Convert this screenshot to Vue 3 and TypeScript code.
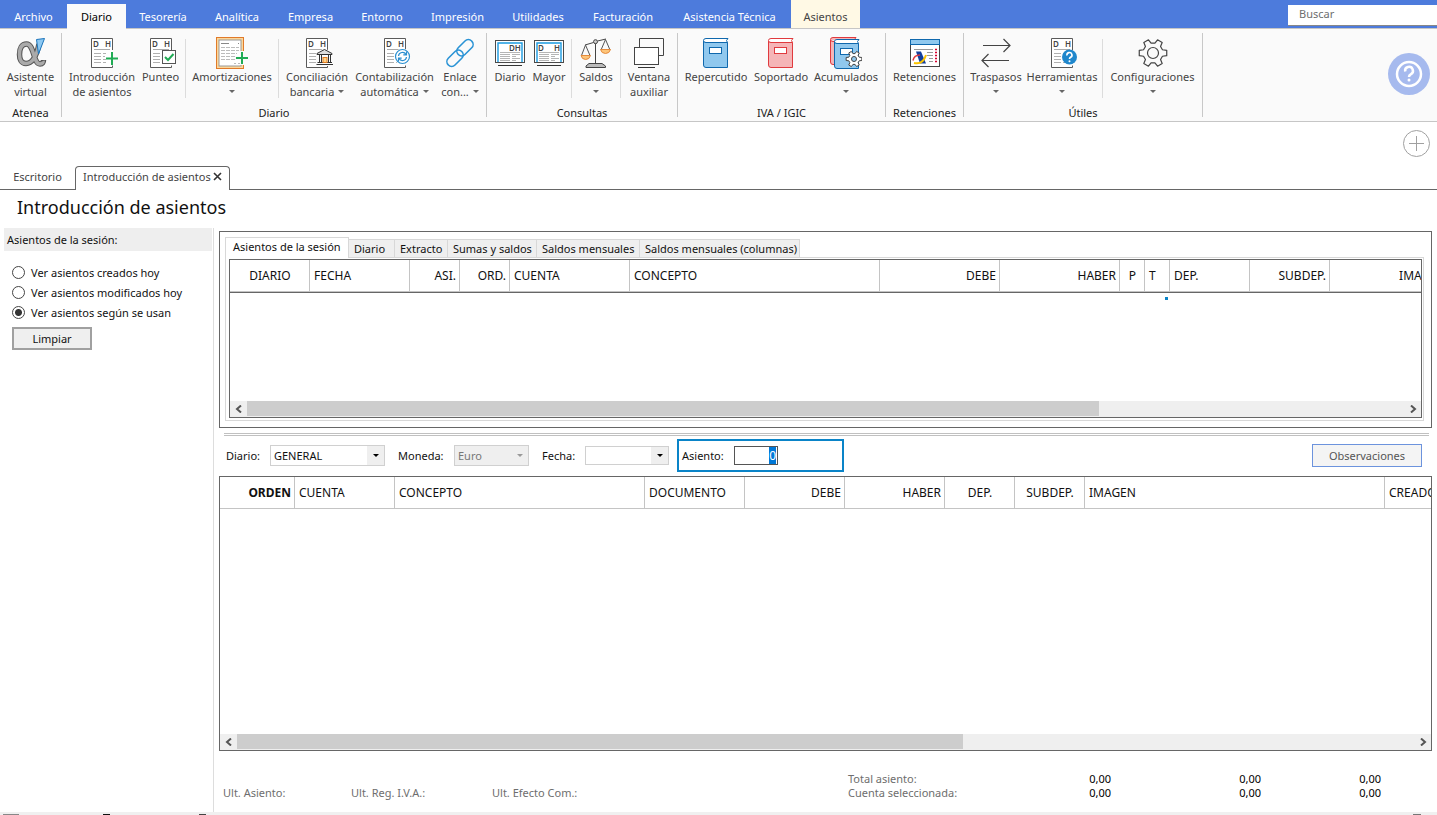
<script setup lang="ts">
import { onMounted, ref } from 'vue'

interface Tool { icon: string; lines: string[]; width: number; menu?: boolean; sep?: boolean }
interface Group { name: string; tools: Tool[]; roomy?: boolean }
interface Column { name: string; width: number; align: 'left' | 'right' | 'center'; strong?: boolean }

const menu = [
  { name: 'Archivo', width: 67 },
  { name: 'Diario', width: 59 },
  { name: 'Tesorería', width: 74 },
  { name: 'Analítica', width: 74 },
  { name: 'Empresa', width: 73 },
  { name: 'Entorno', width: 70 },
  { name: 'Impresión', width: 81 },
  { name: 'Utilidades', width: 80 },
  { name: 'Facturación', width: 90 },
  { name: 'Asistencia Técnica', width: 123 },
  { name: 'Asientos', width: 69 },
]

const groups: Group[] = [
  { name: 'Atenea', tools: [{ icon: 'alpha', lines: ['Asistente', 'virtual'], width: 61 }] },
  {
    name: 'Diario',
    tools: [
      { icon: 'doc-plus', lines: ['Introducción', 'de asientos'], width: 68 },
      { icon: 'doc-check', lines: ['Punteo'], width: 49, sep: true },
      { icon: 'amort', lines: ['Amortizaciones', ''], width: 92, menu: true, sep: true },
      { icon: 'doc-bank', lines: ['Conciliación', 'bancaria'], width: 76, menu: true },
      { icon: 'doc-sync', lines: ['Contabilización', 'automática'], width: 79, menu: true },
      { icon: 'link', lines: ['Enlace', 'con...'], width: 52, menu: true },
    ],
  },
  {
    name: 'Consultas',
    tools: [
      { icon: 'screen-dh', lines: ['Diario'], width: 34 },
      { icon: 'screen-d-h', lines: ['Mayor'], width: 44, sep: true },
      { icon: 'scale', lines: ['Saldos', ''], width: 48, menu: true, sep: true },
      { icon: 'windows', lines: ['Ventana', 'auxiliar'], width: 56 },
    ],
  },
  {
    name: 'IVA / IGIC',
    roomy: true,
    tools: [
      { icon: 'book-blue', lines: ['Repercutido'], width: 64 },
      { icon: 'book-red', lines: ['Soportado'], width: 66 },
      { icon: 'books', lines: ['Acumulados', ''], width: 64, menu: true },
    ],
  },
  { name: 'Retenciones', tools: [{ icon: 'tax', lines: ['Retenciones'], width: 77 }] },
  {
    name: 'Útiles',
    tools: [
      { icon: 'arrows', lines: ['Traspasos', ''], width: 52, menu: true },
      { icon: 'doc-help', lines: ['Herramientas', ''], width: 80, menu: true, sep: true },
      { icon: 'gear', lines: ['Configuraciones', ''], width: 99, menu: true },
    ],
  },
]

const sessionTabs = [
  { name: 'Asientos de la sesión', width: 124 },
  { name: 'Diario', width: 46 },
  { name: 'Extracto', width: 53 },
  { name: 'Sumas y saldos', width: 89 },
  { name: 'Saldos mensuales', width: 103 },
  { name: 'Saldos mensuales (columnas)', width: 160 },
]

const sessionColumns: Column[] = [
  { name: 'DIARIO', width: 80, align: 'center' },
  { name: 'FECHA', width: 100, align: 'left' },
  { name: 'ASI.', width: 50, align: 'right' },
  { name: 'ORD.', width: 50, align: 'right' },
  { name: 'CUENTA', width: 120, align: 'left' },
  { name: 'CONCEPTO', width: 250, align: 'left' },
  { name: 'DEBE', width: 120, align: 'right' },
  { name: 'HABER', width: 120, align: 'right' },
  { name: 'P', width: 25, align: 'center' },
  { name: 'T', width: 25, align: 'left' },
  { name: 'DEP.', width: 80, align: 'left' },
  { name: 'SUBDEP.', width: 80, align: 'right' },
  { name: 'IMAGEN', width: 120, align: 'right' },
]

const entryColumns: Column[] = [
  { name: 'ORDEN', width: 75, align: 'right', strong: true },
  { name: 'CUENTA', width: 100, align: 'left' },
  { name: 'CONCEPTO', width: 250, align: 'left' },
  { name: 'DOCUMENTO', width: 100, align: 'left' },
  { name: 'DEBE', width: 100, align: 'right' },
  { name: 'HABER', width: 100, align: 'right' },
  { name: 'DEP.', width: 70, align: 'center' },
  { name: 'SUBDEP.', width: 70, align: 'center' },
  { name: 'IMAGEN', width: 300, align: 'left' },
  { name: 'CREADO', width: 120, align: 'left' },
]

const filters = ['Ver asientos creados hoy', 'Ver asientos modificados hoy', 'Ver asientos según se usan']
const filter = ref(filters[2])
const journal = ref('GENERAL')
const currency = ref('Euro')
const date = ref('')
const entry = ref('0')
const entryField = ref<HTMLInputElement | null>(null)

const total = (cols: Column[]) => cols.reduce((sum, c) => sum + c.width, 0)

function gear(cx: number, cy: number, outer: number, inner: number): string {
  const pts: string[] = []
  for (let i = 0; i < 6; i++) {
    for (const [deg, r] of [[-19, inner], [-11, outer], [11, outer], [19, inner]]) {
      const a = ((i * 60 + deg) * Math.PI) / 180
      pts.push(`${(cx + r * Math.cos(a)).toFixed(2)} ${(cy + r * Math.sin(a)).toFixed(2)}`)
    }
  }
  return `M${pts.join('L')}Z`
}

onMounted(() => {
  entryField.value?.focus()
  entryField.value?.select()
})
</script>

<template>
  <div class="app">
    <header class="menubar">
      <nav class="menu">
        <button
          v-for="item in menu"
          :key="item.name"
          type="button"
          :class="['menu-item', { active: item.name === 'Diario', context: item.name === 'Asientos' }]"
          :style="{ width: item.width + 'px' }"
        >{{ item.name }}</button>
      </nav>
      <input class="search" type="search" placeholder="Buscar" aria-label="Buscar" />
    </header>

    <section class="ribbon">
      <div v-for="group in groups" :key="group.name" :class="['group', { wide: group.tools.length > 1, roomy: group.roomy }]">
        <div class="tools">
          <template v-for="tool in group.tools" :key="tool.icon">
            <button type="button" class="tool" :style="{ width: tool.width + 'px' }">
              <svg class="icon" width="32" height="32" viewBox="0 0 32 32" fill="none" aria-hidden="true">
                <g v-if="tool.icon.startsWith('doc')">
                  <path d="M26.5 13V1.5H5.5V30.5H26.5V28.5" fill="#fff" stroke="#5a5a5a" />
                  <text class="letters" x="7" y="9.5">D</text>
                  <text class="letters" x="19" y="9.5">H</text>
                  <path d="M8 12.5H24" stroke="#aaa" />
                  <path d="M8 16.5H15M8 19.5H15M8 22.5H15M8 25.5H15M17 16.5H20M17 19.5H19M17 22.5H20M17 25.5H20" stroke="#b0b0b0" />
                </g>
                <path v-if="tool.icon === 'doc-plus'" d="M26 15V28M20 21.5H32" stroke="#1fab54" stroke-width="2" />
                <template v-if="tool.icon === 'doc-check'">
                  <rect x="17.5" y="13.5" width="13" height="13" fill="#fff" stroke="#555" />
                  <path d="M20 20L23 23L28.5 17" stroke="#1fab54" stroke-width="2" />
                </template>
                <template v-if="tool.icon === 'doc-bank'">
                  <path d="M15 16L23.5 11L32 16V29H15Z" fill="#fafafa" />
                  <path d="M16 17.5V16.5L23.5 12.5L31 16.5V17.5Z" fill="#ddd" stroke="#333" />
                  <path d="M18.5 18V25M20.5 18V25M27.5 18V25M29.5 18V25M16.5 25.5H31M15.5 27.5H32" stroke="#333" />
                  <rect x="22" y="20.5" width="4" height="5" fill="#ffd58a" stroke="#e07a1f" />
                </template>
                <template v-if="tool.icon === 'doc-sync'">
                  <circle cx="23.5" cy="19.5" r="8" fill="#fff" />
                  <circle cx="23.5" cy="19.5" r="7" stroke="#2a8fd0" stroke-width="1.2" />
                  <path d="M19.5 19A4 4 0 0 1 27 17.5M27.5 14.5V17.8H24.3M27.5 20A4 4 0 0 1 20 21.5M19.5 24.5V21.2H22.7" stroke="#2a8fd0" stroke-width="1.2" />
                </template>
                <template v-if="tool.icon === 'doc-help'">
                  <circle cx="23.5" cy="20" r="7.5" fill="#1f87cc" />
                  <path d="M21 18.5A2.5 2.5 0 1 1 24.5 20.3Q23.5 20.9 23.5 22" stroke="#fff" stroke-width="1.6" />
                  <circle cx="23.5" cy="24.3" r="1" fill="#fff" />
                </template>
                <template v-if="tool.icon === 'alpha'">
                  <path d="M24 7C22 17 18 26.5 11 26.5C6 26.5 4.5 22 4.5 17.5C4.5 11 7 7 11.5 7C19.5 7 18 27 25 27C27.5 27 28.5 25 28.5 23" stroke="#555" stroke-width="5.5" />
                  <path d="M24 7C22 17 18 26.5 11 26.5C6 26.5 4.5 22 4.5 17.5C4.5 11 7 7 11.5 7C19.5 7 18 27 25 27C27.5 27 28.5 25 28 24" stroke="#aaa" stroke-width="3.5" />
                  <path d="M21.5 2.5L29.5 1.5L23.5 17Z" fill="#8cc8f2" stroke="#1b74bb" />
                </template>
                <template v-if="tool.icon === 'amort'">
                  <rect x="0.5" y="0.5" width="27" height="31" fill="#fcd699" stroke="#e07a2a" />
                  <rect x="3" y="3" width="22" height="26" fill="#fff" stroke="#999" />
                  <path d="M5 6.5H13M22 6.5H23" stroke="#888" />
                  <path d="M5 10.5H23M5 13.5H23M5 16.5H21M5 19.5H20M5 22.5H20M18 26.5H20M22 26.5H24" stroke="#bbb" stroke-dasharray="4 1" />
                  <path d="M26 14V28M19 21H32" stroke="#fafafa" stroke-width="4" />
                  <path d="M26 15V27M20 21H32" stroke="#1fab54" stroke-width="2" />
                </template>
                <g v-if="tool.icon === 'link'" stroke="#2a93d5" stroke-width="1.6">
                  <rect x="11.5" y="6" width="19" height="9.5" rx="4.7" transform="rotate(-45 21 10.8)" />
                  <rect x="1.5" y="16.5" width="19" height="9.5" rx="4.7" transform="rotate(-45 11 21.2)" />
                </g>
                <g v-if="tool.icon.startsWith('screen')">
                  <rect x="1.5" y="3.5" width="29" height="22" fill="#fff" stroke="#4a4a4a" />
                  <path d="M4 25V6H28V25" stroke="#1a9ae0" stroke-width="1.4" />
                  <text v-if="tool.icon === 'screen-dh'" class="letters" x="15" y="13.5">DH</text>
                  <template v-else>
                    <text class="letters" x="5" y="13.5">D</text>
                    <text class="letters" x="21" y="13.5">H</text>
                  </template>
                  <path d="M6 15.5H26M6 17.5H16M18 17.5H26M6 19.5H16M18 19.5H22M6 21.5H16M18 21.5H26M6 23.5H16M18 23.5H22" stroke="#b5b5b5" />
                  <path d="M4 28.5H28" stroke="#333" />
                </g>
                <template v-if="tool.icon === 'scale'">
                  <path d="M15.5 5V27" stroke="#444" />
                  <path d="M5 8L13.5 5.5M17.5 4L26 2" stroke="#444" />
                  <circle cx="15.5" cy="4.7" r="2" fill="#ccc" stroke="#444" />
                  <path d="M5.5 8L1.5 18.5M5.5 8L10 18.5M25.5 2.5L21 13M25.5 2.5L30 13" stroke="#555" />
                  <path d="M1 18.5H10.5Q9.5 22.5 5.7 22.5T1 18.5ZM20.5 12.5H30.5Q29.5 16.5 25.5 16.5T20.5 12.5Z" fill="#fdc57a" stroke="#e58a3c" />
                  <path d="M6 30.5V29L9 26.5H22L25.5 29V30.5Z" fill="#bbb" stroke="#444" />
                </template>
                <template v-if="tool.icon === 'windows'">
                  <path d="M6.5 10V1.5H30.5V18.5H26" stroke="#444" />
                  <rect x="1.5" y="10.5" width="24" height="17" fill="#fff" stroke="#444" />
                  <path d="M5 30.5H22" stroke="#333" />
                </template>
                <g v-if="tool.icon.startsWith('book')">
                  <g v-if="tool.icon === 'books'" transform="translate(-3 -1)">
                    <path d="M3.5 4V26Q3.5 28.5 6 28.5H28.5V5.5H6Q3.5 5.5 3.5 3.5T6 1.5H29L27.5 3.5L28.5 5.5" fill="#f5b5b7" stroke="#e03a3e" />
                  </g>
                  <g :transform="tool.icon === 'books' ? 'translate(1 1)' : undefined" :stroke="tool.icon === 'book-red' ? '#e03a3e' : '#0f68ad'">
                    <path d="M3.5 4V28Q3.5 30.5 6 30.5H27.5V5.5H6Z" :fill="tool.icon === 'book-red' ? '#f5b5b7' : '#90c8ee'" />
                    <path d="M27.5 5.5H6Q3.5 5.5 3.5 3.5T6 1.5H28L26.5 3.5Z" fill="#fff" />
                    <rect x="9.5" y="10.5" width="12" height="6" fill="#fff" />
                  </g>
                  <template v-if="tool.icon === 'books'">
                    <path :d="gear(24, 22, 8, 5.5)" fill="#fff" stroke="#444" />
                    <circle cx="24" cy="22" r="2.5" fill="#90c8ee" stroke="#444" />
                  </template>
                </g>
                <template v-if="tool.icon === 'tax'">
                  <rect x="1.5" y="2.5" width="29" height="27" fill="#fff" stroke="#444" />
                  <rect x="1.5" y="2.5" width="29" height="5" fill="#90c8ee" stroke="#0f68ad" />
                  <path d="M5 12.5H24M18 15.5H24M18 18.5H24M20 21.5H24M20 24.5H24" stroke="#999" />
                  <path d="M26 12.5H28M26 15.5H28M26 18.5H28M26 21.5H28M26 24.5H28" stroke="#d8002e" stroke-width="1.5" />
                  <path d="M7 14.5H12L17 26.5H11Z" fill="#123f9c" />
                  <path d="M4 23.5Q5 18 11 18" stroke="#e03a3e" stroke-width="1.5" />
                  <path d="M5 26Q14 28 17 18" stroke="#fcc400" stroke-width="2" />
                </template>
                <path v-if="tool.icon === 'arrows'" d="M3 8.5H30M23.5 2L30 8.5L23.5 15M29 23.5H2M8.5 17L2 23.5L8.5 30" stroke="#444" stroke-width="1.2" />
                <template v-if="tool.icon === 'gear'">
                  <path :d="gear(16, 16, 14, 10)" stroke="#444" stroke-width="1.2" stroke-linejoin="round" />
                  <circle cx="16" cy="16" r="5.5" stroke="#444" stroke-width="1.2" />
                </template>
              </svg>
              <span v-for="(line, i) in tool.lines" :key="i" class="line">
                {{ line }}<i v-if="tool.menu && i === tool.lines.length - 1" class="caret"></i>
              </span>
            </button>
            <span v-if="tool.sep" class="sep"></span>
          </template>
        </div>
        <div class="group-name">{{ group.name }}</div>
      </div>
      <button type="button" class="help" aria-label="Ayuda">
        <svg width="42" height="42" viewBox="0 0 42 42" fill="none">
          <circle cx="21" cy="21" r="21" fill="#a6baee" />
          <circle cx="21" cy="21" r="12" stroke="#fff" stroke-width="2.5" />
          <path d="M17.2 18.5A3.9 3.9 0 1 1 22.7 21.3Q21 22.2 21 24" stroke="#fff" stroke-width="2.5" />
          <circle cx="21" cy="27" r="1.5" fill="#fff" />
        </svg>
      </button>
    </section>

    <div class="quick">
      <button type="button" class="add" aria-label="Añadir">
        <svg width="28" height="28" viewBox="0 0 28 28" fill="none" stroke="#a0a0a0">
          <circle cx="14.5" cy="14.5" r="13" />
          <path d="M7 14.5H22M14.5 7V22" />
        </svg>
      </button>
    </div>

    <nav class="documents">
      <button type="button" class="document">Escritorio</button>
      <div class="document current">
        <span>Introducción de asientos</span>
        <button type="button" class="close" aria-label="Cerrar">
          <svg width="9" height="9" viewBox="0 0 9 9" fill="none" stroke="#333" stroke-width="1.6"><path d="M1 1L8 8M8 1L1 8" /></svg>
        </button>
      </div>
    </nav>

    <h1 class="title">Introducción de asientos</h1>

    <div class="body">
      <aside class="side">
        <h2 class="side-title">Asientos de la sesión:</h2>
        <div class="filters">
          <label v-for="option in filters" :key="option" class="filter">
            <input v-model="filter" type="radio" name="filter" :value="option" />{{ option }}
          </label>
          <button type="button" class="clear">Limpiar</button>
        </div>
      </aside>

      <main class="main">
        <section class="session">
          <div class="tabs">
            <button
              v-for="(tab, i) in sessionTabs"
              :key="tab.name"
              type="button"
              :class="['tab', { selected: i === 0 }]"
              :style="{ width: tab.width + 'px' }"
            >{{ tab.name }}</button>
          </div>
          <div class="frame">
            <div class="grid">
              <div class="view">
                <table class="head dark" :style="{ width: total(sessionColumns) + 'px' }">
                  <thead>
                    <tr>
                      <th v-for="c in sessionColumns" :key="c.name" :class="c.align" :style="{ width: c.width + 'px' }">{{ c.name }}</th>
                    </tr>
                  </thead>
                </table>
                <span class="marker"></span>
              </div>
              <div class="scroll">
                <button type="button" class="step" aria-label="Izquierda"><svg width="8" height="8" viewBox="0 0 8 8"><path d="M6 0.5L2 4L6 7.5" /></svg></button>
                <div class="track"><div class="thumb" :style="{ width: '73.6%' }"></div></div>
                <button type="button" class="step" aria-label="Derecha"><svg width="8" height="8" viewBox="0 0 8 8"><path d="M2 0.5L6 4L2 7.5" /></svg></button>
              </div>
            </div>
          </div>
        </section>

        <div class="splitter"></div>

        <form class="form" @submit.prevent>
          <label for="journal" class="l-journal">Diario:</label>
          <span class="combo journal">
            <select id="journal" v-model="journal"><option>GENERAL</option></select><i class="drop"></i>
          </span>
          <label for="currency" class="l-currency">Moneda:</label>
          <span class="combo currency">
            <select id="currency" v-model="currency" disabled><option>Euro</option></select><i class="drop"></i>
          </span>
          <label for="date" class="l-date">Fecha:</label>
          <span class="combo date">
            <input id="date" v-model="date" type="text" /><button type="button" class="drop" aria-label="Calendario"></button>
          </span>
          <div class="entry">
            <label for="entry">Asiento:</label>
            <input id="entry" ref="entryField" v-model="entry" type="text" />
          </div>
          <button type="button" class="notes">Observaciones</button>
        </form>

        <section class="grid entries">
          <div class="view">
            <table class="head" :style="{ width: total(entryColumns) + 'px' }">
              <thead>
                <tr>
                  <th v-for="c in entryColumns" :key="c.name" :class="[c.align, { strong: c.strong }]" :style="{ width: c.width + 'px' }">{{ c.name }}</th>
                </tr>
              </thead>
            </table>
          </div>
          <div class="scroll">
            <button type="button" class="step" aria-label="Izquierda"><svg width="8" height="8" viewBox="0 0 8 8"><path d="M6 0.5L2 4L6 7.5" /></svg></button>
            <div class="track"><div class="thumb" :style="{ width: '61.7%' }"></div></div>
            <button type="button" class="step" aria-label="Derecha"><svg width="8" height="8" viewBox="0 0 8 8"><path d="M2 0.5L6 4L2 7.5" /></svg></button>
          </div>
        </section>

        <footer class="summary">
          <div class="last">
            <span>Ult. Asiento:</span><span>Ult. Reg. I.V.A.:</span><span>Ult. Efecto Com.:</span>
          </div>
          <table class="totals">
            <tbody>
              <tr><th scope="row">Total asiento:</th><td>0,00</td><td>0,00</td><td>0,00</td></tr>
              <tr><th scope="row">Cuenta seleccionada:</th><td>0,00</td><td>0,00</td><td>0,00</td></tr>
            </tbody>
          </table>
        </footer>
      </main>
    </div>

    <div class="status">
      <svg width="210" height="3" viewBox="0 0 210 3"><path d="M3 2H19V3H3Z" fill="#888" /><path d="M103 2H110V3H103Z" fill="#111" /><path d="M199 2H206V3H199Z" fill="#444" /></svg>
      <svg width="26" height="3" viewBox="0 0 26 3"><path d="M2 2H10V3H2Z" fill="#777" /></svg>
    </div>
  </div>
</template>

<style>
html,
body {
  background: #fff;
}
</style>

<style scoped>
.app {
  display: flex;
  flex-direction: column;
  min-height: 100vh;
  overflow: hidden;
  color: #111;
  background: #fff;
  font: 11px/15px "Noto Sans", "Open Sans", sans-serif;
}
.app *,
.app *::before,
.app *::after {
  box-sizing: border-box;
}
button,
input,
select {
  margin: 0;
  padding: 0;
  border: 0;
  border-radius: 0;
  background: none;
  color: inherit;
  font: inherit;
  outline: none;
}

/* Menu bar */
.menubar {
  display: flex;
  justify-content: space-between;
  height: 28px;
  background: #4d7bdc;
}
.menu {
  display: flex;
  align-items: flex-end;
}
.menu-item {
  height: 28px;
  padding-top: 5px;
  color: #fff;
  white-space: nowrap;
}
.menu-item.active {
  z-index: 1;
  height: 25px;
  margin-bottom: -1px;
  padding-top: 0;
  background: #fafafa;
  color: #000;
}
.menu-item.context {
  background: #fff9e5;
  color: #444;
}
.search {
  width: 149px;
  height: 21px;
  margin-top: 5px;
  padding: 0 11px 3px;
  border-bottom: 1px solid #888;
  background: #fff;
  appearance: none;
}
.search::placeholder {
  color: #6e6e6e;
}

/* Ribbon */
.ribbon {
  display: flex;
  height: 94px;
  border-top: 1px solid #c6c6c6;
  border-bottom: 1px solid #c6c6c6;
  background: #fafafa;
}
.group {
  display: flex;
  flex-direction: column;
  height: 84px;
  margin-top: 4px;
  border-right: 1px solid #c8c8c8;
}
.group.wide .tools {
  padding-left: 6px;
}
.group.roomy .tools {
  padding-right: 7px;
}
.tools {
  display: flex;
  flex: none;
  height: 73px;
  padding-top: 4px;
}
.tool {
  display: flex;
  flex-direction: column;
  align-items: center;
  height: 62px;
  color: #444;
}
.icon {
  flex: none;
}
.letters {
  font: 600 8px "Noto Sans", sans-serif;
  fill: #444;
}
.line {
  display: flex;
  align-items: center;
  height: 15px;
  gap: 4px;
  white-space: nowrap;
}
.caret {
  border: 3px solid transparent;
  border-top-color: #666;
  border-bottom: 0;
}
.sep {
  width: 1px;
  height: 59px;
  margin-top: 2px;
  background: #dcdcdc;
}
.group-name {
  line-height: 14px;
  text-align: center;
  color: #222;
}
.help {
  width: 42px;
  height: 42px;
  margin: 24px 7px 0 auto;
}
.help svg,
.add svg {
  display: block;
}

/* Open documents */
.quick {
  display: flex;
  justify-content: flex-end;
  height: 44px;
  padding: 7px 7px 0;
}
.add {
  width: 28px;
  height: 28px;
}
.documents {
  display: flex;
  height: 24px;
  border-bottom: 1px solid #666;
}
.document {
  width: 75px;
  height: 23px;
  padding-bottom: 2px;
  color: #444;
}
.document.current {
  display: flex;
  align-items: center;
  gap: 2px;
  width: 155px;
  height: 24px;
  padding: 0 7px 4px;
  border: 1px solid #666;
  border-bottom: 0;
  border-radius: 4px 4px 0 0;
  background: #fff;
  white-space: nowrap;
}
.close {
  width: 9px;
  height: 9px;
}
.close svg {
  display: block;
}
.title {
  margin: 0;
  padding: 5px 17px 8px;
  font-size: 18px;
  line-height: 25px;
  font-weight: 400;
}

/* Side panel */
.body {
  display: flex;
  flex: 1;
}
.side {
  width: 214px;
  padding-left: 4px;
  border-right: 1px solid #ddd;
}
.side-title {
  margin: 0 1px 0 0;
  padding: 4px 3px;
  background: #eee;
  font-size: 11px;
  line-height: 15px;
  font-weight: 400;
}
.filters {
  display: flex;
  flex-direction: column;
  align-items: flex-start;
  padding: 11px 8px;
}
.filter {
  display: flex;
  align-items: center;
  gap: 6px;
  height: 20px;
}
.filter input {
  width: 13px;
  height: 13px;
  border: 1px solid #444;
  border-radius: 50%;
  background: #fff;
  appearance: none;
}
.filter input:checked {
  background: radial-gradient(circle, #333 0 3px, #fff 4px);
}
.clear {
  width: 80px;
  height: 23px;
  margin-top: 5px;
  border: 2px solid #a0a0a0;
  background: #efefef;
}

/* Session entries */
.main {
  display: flex;
  flex: 1;
  flex-direction: column;
  min-width: 0;
  padding: 3px 5px 0;
}
.session {
  padding: 5px 7px 6px 5px;
  border: 1px solid #666;
}
.tabs {
  display: flex;
  align-items: flex-end;
  height: 20px;
}
.tab {
  height: 18px;
  padding-left: 5px;
  border: 1px solid #d8d8d8;
  border-width: 1px 1px 0 0;
  background: #efefef;
  text-align: left;
  white-space: nowrap;
}
.tab.selected {
  z-index: 1;
  height: 21px;
  margin-bottom: -1px;
  padding: 0 0 3px 7px;
  border-left-width: 1px;
  background: #fff;
}
.frame {
  padding: 1px 1px 2px 3px;
  border: 1px solid #d8d8d8;
}
.grid {
  display: flex;
  flex-direction: column;
  border: 1px solid #666;
}
.view {
  position: relative;
  min-height: 141px;
  overflow: hidden;
}
.head {
  table-layout: fixed;
  border-collapse: separate;
  border-spacing: 0;
}
.head th {
  height: 32px;
  padding: 0 3px 0 4px;
  border-right: 1px solid #c4c4c4;
  border-bottom: 1px solid #c4c4c4;
  font-size: 12px;
  line-height: 16px;
  font-weight: 400;
}
.head.dark {
  border-bottom: 1px solid #666;
}
.head .left {
  text-align: left;
}
.head .right {
  text-align: right;
}
.head .center {
  text-align: center;
}
.head .strong {
  font-weight: 700;
}
.marker {
  position: absolute;
  top: 37px;
  left: 935px;
  width: 3px;
  height: 3px;
  background: #0a84c8;
}
.scroll {
  display: flex;
  height: 16px;
  padding-bottom: 1px;
  background: #efefef;
}
.step {
  display: flex;
  align-items: center;
  justify-content: center;
  width: 17px;
}
.step path {
  fill: none;
  stroke: #555;
  stroke-width: 2;
}
.track {
  flex: 1;
}
.thumb {
  height: 15px;
  background: #cdcdcd;
}
.splitter {
  height: 3px;
  margin: 5px 3px 0 5px;
  border: 1px solid #c0c0c0;
  border-width: 1px 0;
}

/* Entry form */
.form {
  display: flex;
  align-items: center;
  height: 40px;
  padding: 0 10px 2px 7px;
}
.l-journal {
  width: 44px;
}
.l-currency {
  width: 56px;
  margin-left: 13px;
}
.l-date {
  width: 43px;
  margin-left: 13px;
}
.combo {
  display: flex;
  height: 21px;
  border: 1px solid #d0d0d0;
}
.combo select,
.combo input {
  flex: 1;
  min-width: 0;
  padding-left: 3px;
  appearance: none;
  opacity: 1;
}
.combo .drop {
  display: flex;
  align-items: center;
  justify-content: center;
  width: 17px;
  background: #efefef;
  pointer-events: none;
}
.combo .drop::after {
  content: "";
  border: 3px solid transparent;
  border-top-color: #000;
  border-bottom: 0;
}
.journal {
  width: 115px;
}
.currency {
  width: 75px;
  background: #efefef;
  color: #777;
}
.currency .drop::after {
  border-top-color: #999;
}
.date {
  width: 84px;
  height: 19px;
}
.entry {
  display: flex;
  align-items: center;
  justify-content: space-between;
  width: 167px;
  height: 33px;
  margin-left: 8px;
  padding: 0 64px 0 3px;
  border: 2px solid #0a84c8;
}
.entry input {
  width: 44px;
  height: 19px;
  padding: 0 1px;
  border: 1px solid #555;
  font-size: 12px;
  text-align: right;
}
.entry input::selection {
  background: #0078d7;
  color: #fff;
}
.notes {
  width: 110px;
  height: 23px;
  margin-left: auto;
  border: 1px solid #6c93dd;
  background: #f4f4f4;
  color: #555;
}

/* Entry lines */
.entries {
  flex: 1;
}
.entries .view {
  flex: 1;
}

/* Summary */
.summary {
  display: flex;
  align-items: flex-end;
  justify-content: space-between;
  height: 61px;
  padding: 0 51px 12px 4px;
  line-height: 14px;
  color: #6e6e6e;
}
.last {
  display: grid;
  grid-template-columns: 128px 141px 100px;
}
.totals {
  border-spacing: 0;
}
.totals th {
  width: 150px;
  padding: 0;
  font-weight: 400;
  text-align: left;
}
.totals td {
  width: 120px;
  padding: 0;
  color: #000;
  text-align: right;
}
.totals td:nth-child(2) {
  width: 113px;
}
.totals td:nth-child(3) {
  width: 150px;
}

.status {
  display: flex;
  justify-content: space-between;
  height: 3px;
  background: #f0f0f0;
}
</style>
